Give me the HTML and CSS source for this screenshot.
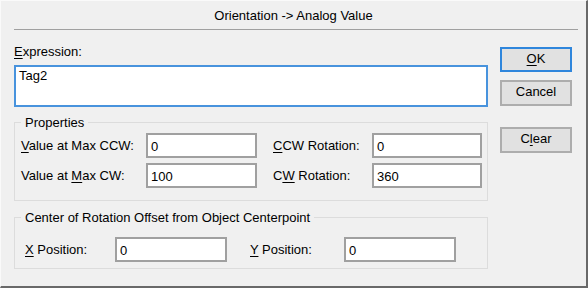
FILE: index.html
```html
<!DOCTYPE html>
<html>
<head>
<meta charset="utf-8">
<link rel="stylesheet" href="styles.css">
</head>
<body>
<div class="window">
  <div class="title">Orientation -&gt; Analog Value</div>
  <div class="sep"></div>
  <div class="content">
    <div class="main">
      <div class="label"><u>E</u>xpression:</div>
      <div class="expr">Tag2</div>
      <fieldset class="group props">
        <legend>Properties</legend>
        <div class="grid4">
          <span class="lbl"><u>V</u>alue at Max CCW:</span>
          <div class="field">0</div>
          <span class="lbl lbl-right"><u>C</u>CW Rotation:</span>
          <div class="field">0</div>
          <span class="lbl">Value at <u>M</u>ax CW:</span>
          <div class="field">100</div>
          <span class="lbl lbl-right">C<u>W</u> Rotation:</span>
          <div class="field">360</div>
        </div>
      </fieldset>
      <fieldset class="group center">
        <legend>Center of Rotation Offset from Object Centerpoint</legend>
        <div class="grid-pos">
          <span class="lbl"><u>X</u> Position:</span>
          <div class="field">0</div>
          <span class="lbl lbl-y"><u>Y</u> Position:</span>
          <div class="field">0</div>
        </div>
      </fieldset>
    </div>
    <div class="buttons">
      <div class="btn default"><u>O</u>K</div>
      <div class="btn">Cancel</div>
      <div class="btn clear">C<u>l</u>ear</div>
    </div>
  </div>
</div>
</body>
</html>
```
FILE: styles.css
```css
html, body {
  margin: 0;
  padding: 0;
}
body {
  font-family: "Liberation Sans", Arial, sans-serif;
  font-size: 13px;
  line-height: 15px;
  color: #000;
  background: #f0f0f0;
}
.window {
  width: 588px;
  height: 288px;
  box-sizing: border-box;
  background: #f0f0f0;
  border-right: 2px solid #696969;
  border-bottom: 2px solid #696969;
  border-left: 1px solid #fafafa;
  border-top: 1px solid #fafafa;
}
.title {
  padding-top: 7px;
  text-align: center;
  height: 15px;
}
.sep {
  margin: 6px 8px 0 13px;
  height: 1px;
  background: #a0a0a0;
}
.content {
  display: flex;
  padding-left: 13px;
  gap: 12px;
}
.main {
  width: 474px;
  display: flex;
  flex-direction: column;
}
.label {
  margin-top: 14px;
  height: 15px;
}
.expr {
  margin-top: 6px;
  height: 42px;
  box-sizing: border-box;
  border: 2px solid #4893dd;
  background: #fff;
  padding: 1px 3px;
}
.group {
  margin: 0;
  border: 1px solid #dcdcdc;
  padding: 0 0 0 6px;
}
.group legend {
  padding: 0 4px;
  line-height: 15px;
}
.props {
  margin-top: 8px;
  padding-bottom: 12px;
}
.grid4 {
  display: grid;
  grid-template-columns: 125px 111px 115px 110px;
  row-gap: 5px;
  margin-top: 3px;
  align-items: center;
}
.lbl-right {
  padding-left: 16px;
}
.center {
  margin-top: 9px;
  padding-bottom: 6px;
}
.grid-pos {
  display: grid;
  grid-template-columns: 90px 112px 117px 112px;
  align-items: center;
  margin-top: 12px;
  padding-left: 4px;
}
.lbl-y {
  padding-left: 23px;
}
.field {
  height: 25px;
  box-sizing: border-box;
  border: 2px solid #a0a0a0;
  background: #fff;
  padding: 3px 3px 0;
  line-height: 17px;
}
.lbl {
  white-space: nowrap;
}
.buttons {
  width: 72px;
  display: flex;
  flex-direction: column;
  padding-top: 17px;
}
.btn {
  height: 26px;
  box-sizing: border-box;
  border: 2px solid #adadad;
  background: #e1e1e1;
  text-align: center;
  line-height: 20px;
  margin-bottom: 7px;
}
.btn.default {
  border-color: #2f86dc;
  height: 25px;
  margin-bottom: 8px;
}
.btn.clear {
  margin-top: 14px;
}
u {
  text-decoration: underline;
  text-underline-offset: 2px;
}
```
